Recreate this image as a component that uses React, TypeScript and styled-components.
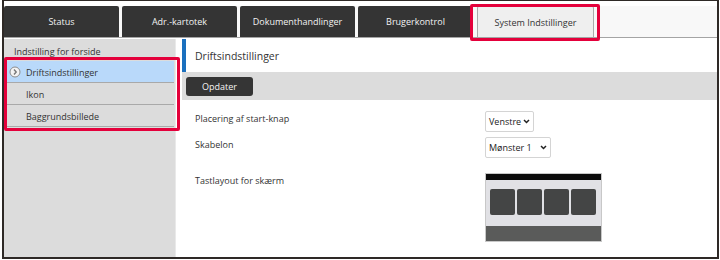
import * as React from 'react';
import styled, { createGlobalStyle } from 'styled-components';

const GlobalStyle = createGlobalStyle`
  html, body {
    margin: 0;
    padding: 0;
    background: #ffffff;
  }
  body {
    font-family: 'Open Sans', 'Noto Sans', 'Liberation Sans', sans-serif;
    color: #333;
  }
`;

const Frame = styled.div`
  position: relative;
  box-sizing: border-box;
  width: 717px;
  height: 259px;
  margin-left: 2px;
  border: 2px solid #2e2926;
  border-top-width: 1px;
  background: #fff;
  display: flex;
  flex-direction: column;
  overflow: hidden;
`;

const TabBar = styled.div`
  display: flex;
  gap: 3px;
  padding-top: 5px;
  height: 31px;
  background: linear-gradient(#fff, #fff 5px, #f8f8f8 5px);
  border-bottom: 1px solid #a4a4a4;
`;

const Tab = styled.div<{ $active?: boolean }>`
  box-sizing: border-box;
  width: ${p => (p.$active ? '117px' : '115px')};
  margin-left: ${p => (p.$active ? '1px' : '0')};
  height: 31px;
  display: flex;
  align-items: center;
  justify-content: center;
  font-size: 9px;
  border-radius: 2px 2px 0 0;
  background: ${p => (p.$active ? '#efefef' : '#343434')};
  color: ${p => (p.$active ? '#333' : '#f2f2f2')};
  border: ${p => (p.$active ? '1px solid #a9a9a9' : 'none')};
  border-top: ${p => (p.$active ? '1px solid #5a9ad8' : 'none')};
  border-bottom: none;
`;

const Body = styled.div`
  flex: 1;
  display: flex;
  min-height: 0;
`;

const Sidebar = styled.div`
  box-sizing: border-box;
  width: 172px;
  margin-top: 1px;
  background: #dcdcdc;
  border-right: 1px solid #e9e9e9;
  display: flex;
  flex-direction: column;
`;

const SideHeader = styled.div`
  box-sizing: border-box;
  height: 22px;
  display: flex;
  align-items: center;
  padding: 3px 0 0 10px;
  font-size: 9px;
  color: #333;
`;

const SideItem = styled.div<{ $active?: boolean }>`
  box-sizing: border-box;
  height: 22px;
  margin: 0 1px 0 2px;
  display: flex;
  align-items: center;
  gap: 5px;
  padding: 1px 0 0 2px;
  font-size: 9px;
  color: #333;
  background: ${p => (p.$active ? '#b9d9fa' : 'transparent')};
  border-bottom: 1px solid #a9a9a9;
`;

const IconSlot = styled.span`
  width: 13px;
  height: 13px;
  display: flex;
  align-items: center;
  justify-content: center;
`;

const Main = styled.div`
  flex: 1;
  margin-left: 6px;
  display: flex;
  flex-direction: column;
`;

const Heading = styled.div`
  height: 33px;
  margin-top: 1px;
  border-left: 4px solid #1b70be;
  display: flex;
  align-items: center;
  padding-left: 9px;
  font-size: 10.5px;
  color: #333;
`;

const Toolbar = styled.div`
  height: 28px;
  background: #dcdcdc;
  display: flex;
  align-items: center;
  padding-left: 4px;
`;

const Button = styled.button`
  width: 67px;
  height: 19px;
  border: none;
  border-radius: 3px;
  background: #353535;
  color: #f4f4f4;
  font-family: inherit;
  font-size: 9px;
  padding: 0;
  cursor: pointer;
`;

const Form = styled.div`
  display: grid;
  grid-template-columns: 290px auto;
  align-items: start;
  padding: 11px 0 0 13px;
`;

const Label = styled.div<{ $gap?: number }>`
  font-size: 9px;
  line-height: 15px;
  color: #333;
  margin-bottom: ${p => p.$gap ?? 0}px;
`;

const Control = styled.div<{ $gap?: number }>`
  margin-bottom: ${p => p.$gap ?? 0}px;
`;

const SelectBox = styled.div<{ $width: number }>`
  box-sizing: border-box;
  width: ${p => p.$width}px;
  height: 21px;
  border: 1px solid #d4d4d4;
  border-radius: 2px;
  background: #fff;
  display: flex;
  align-items: center;
  justify-content: space-between;
  padding: 0 3px 0 3px;
  font-size: 9px;
  color: #222;
`;

const Preview = styled.div`
  box-sizing: border-box;
  width: 117px;
  height: 69px;
  border: 1px solid #c8c8c8;
  display: flex;
  flex-direction: column;
  background: #e1e1e5;
`;

const PreviewTop = styled.div`
  height: 6px;
  background: #0c0c0c;
`;

const KeyRow = styled.div`
  flex: 1;
  display: flex;
  gap: 2px;
  padding: 9px 4px 0 4px;
`;

const Key = styled.div`
  width: 25px;
  height: 26px;
  border-radius: 2px;
  background: #444545;
`;

const PreviewBottom = styled.div`
  height: 15px;
  background: #5a5b5a;
`;

const Highlight = styled.div`
  position: absolute;
  box-sizing: border-box;
  border: 3px solid #e4003b;
  border-radius: 2px;
  pointer-events: none;
`;

const Chevron = () => (
  <svg width="7" height="5" viewBox="0 0 7 5">
    <path d="M1 1 L3.5 3.5 L6 1" fill="none" stroke="#222" strokeWidth="1.5" />
  </svg>
);

const CircleArrow = () => (
  <svg width="12" height="12" viewBox="0 0 12 12">
    <circle cx="6" cy="6" r="5" fill="#f4f4f4" stroke="#8c8c8c" strokeWidth="1" />
    <path d="M5 3.5 L7.2 6 L5 8.5" fill="none" stroke="#777" strokeWidth="1.4" />
  </svg>
);

const tabs = ['Status', 'Adr.-kartotek', 'Dokumenthandlinger', 'Brugerkontrol', 'System Indstillinger'];
const items = ['Driftsindstillinger', 'Ikon', 'Baggrundsbillede'];

export default function App() {
  return (
    <>
      <GlobalStyle />
      <Frame>
        <TabBar>
          {tabs.map((t, i) => (
            <Tab key={t} $active={i === tabs.length - 1}>
              {t}
            </Tab>
          ))}
        </TabBar>
        <Body>
          <Sidebar>
            <SideHeader>Indstilling for forside</SideHeader>
            {items.map((it, i) => (
              <SideItem key={it} $active={i === 0}>
                <IconSlot>{i === 0 && <CircleArrow />}</IconSlot>
                {it}
              </SideItem>
            ))}
          </Sidebar>
          <Main>
            <Heading>Driftsindstillinger</Heading>
            <Toolbar>
              <Button>Opdater</Button>
            </Toolbar>
            <Form>
              <Label $gap={5}>Placering af start-knap</Label>
              <Control $gap={5}>
                <SelectBox $width={49}>
                  Venstre
                  <Chevron />
                </SelectBox>
              </Control>
              <Label $gap={15}>Skabelon</Label>
              <Control $gap={15}>
                <SelectBox $width={66}>
                  Mønster 1
                  <Chevron />
                </SelectBox>
              </Control>
              <Label>Tastlayout for skærm</Label>
              <Control>
                <Preview>
                  <PreviewTop />
                  <KeyRow>
                    <Key />
                    <Key />
                    <Key />
                    <Key />
                  </KeyRow>
                  <PreviewBottom />
                </Preview>
              </Control>
            </Form>
          </Main>
        </Body>
        <Highlight style={{ left: 466, top: 3, width: 130, height: 37 }} />
        <Highlight style={{ left: 0, top: 56, width: 176, height: 74 }} />
      </Frame>
    </>
  );
}
